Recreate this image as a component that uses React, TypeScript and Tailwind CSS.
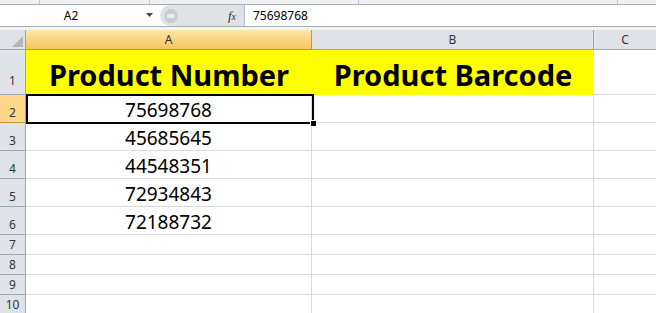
import React from 'react'

const font = "font-['Noto_Sans',sans-serif]"

const rows: { n: number; h: string; a?: string }[] = [
  { n: 2, h: 'h-[28px]', a: '75698768' },
  { n: 3, h: 'h-[28px]', a: '45685645' },
  { n: 4, h: 'h-[28px]', a: '44548351' },
  { n: 5, h: 'h-[28px]', a: '72934843' },
  { n: 6, h: 'h-[28px]', a: '72188732' },
  { n: 7, h: 'h-[20px]' },
  { n: 8, h: 'h-[20px]' },
  { n: 9, h: 'h-[20px]' },
  { n: 10, h: 'h-[20px]' },
]

export default function App() {
  return (
    <div className={`w-[656px] h-[313px] overflow-hidden bg-white ${font}`}>
      {/* ribbon remnant */}
      <div className="flex h-[5px] border-b border-[#a7acb3] bg-[#eef0f3]">
        <div className="w-[40px] border-r border-[#c3c7cd]" />
        <div className="w-[110px] border-r border-[#c3c7cd]" />
        <div className="w-[209px] border-r border-[#c3c7cd]" />
        <div className="w-[259px] border-r border-[#c3c7cd]" />
      </div>

      {/* formula bar */}
      <div className="flex h-[22px] border-b border-[#a7acb3] bg-white">
        <div className="relative flex w-[160px] items-center justify-center">
          <span className="pr-[18px] text-[12px] text-black">A2</span>
          <svg className="absolute left-[146px] top-[8px]" width="7" height="4" viewBox="0 0 7 4">
            <path d="M0 0h7L3.5 4z" fill="#444" />
          </svg>
        </div>
        <div className="relative flex w-[85px] items-center rounded-l-full border-r border-[#b6bcc4] bg-[#dfe3e8]">
          <div className="ml-[4px] h-[14px] w-[14px] rounded-full bg-[#c9cdd2]">
            <div className="mx-auto mt-[5px] h-[4px] w-[8px] rounded-full bg-[#e9ebee]" />
          </div>
          <span className="ml-auto mr-[8px] font-['Liberation_Serif',serif] text-[13px] italic leading-none text-[#333]">
            f<span className="text-[10px]">x</span>
          </span>
        </div>
        <div className="flex flex-1 items-center pl-[8px] text-[12px] text-black">75698768</div>
      </div>

      <div className="h-[3px] bg-[#f4f5f7]" />

      {/* sheet grid */}
      <div className="grid grid-cols-[26px_286px_282px_1fr] text-black">
        {/* column headers */}
        <div className="relative h-[20px] border-r border-b border-[#9ea6b1] bg-[#dfe3e8]">
          <svg className="absolute right-[2px] bottom-[2px]" width="11" height="11" viewBox="0 0 11 11">
            <path d="M11 0v11H0z" fill="#b4b9c0" />
          </svg>
        </div>
        <div className="flex h-[20px] items-center justify-center border-r border-b border-[#c5973f] bg-gradient-to-b from-[#fde6a4] to-[#f7c65d] text-[12px] text-[#333]">
          A
        </div>
        <div className="flex h-[20px] items-center justify-center border-r border-b border-[#9ea6b1] bg-[#dfe3e8] text-[12px] text-[#333]">
          B
        </div>
        <div className="flex h-[20px] items-center justify-center border-b border-[#9ea6b1] bg-[#dfe3e8] text-[12px] text-[#333]">
          C
        </div>

        {/* row 1 */}
        <div className="flex h-[45px] items-end justify-center border-r border-b border-[#9ea6b1] bg-[#dfe3e8] pb-[7px] text-[12px] leading-none text-[#333]">
          1
        </div>
        <div className="flex h-[45px] items-center justify-center border-b border-[#0000ff] bg-[#ffff00] pt-[4px] text-[29px] font-bold leading-none">
          Product Number
        </div>
        <div className="flex h-[45px] items-center justify-center border-b border-[#ffff00] bg-[#ffff00] pt-[4px] text-[29px] font-bold leading-none">
          Product Barcode
        </div>
        <div className="h-[45px] border-b border-[#d9d9d9]" />

        {rows.map(r => (
          <React.Fragment key={r.n}>
            <div
              className={`flex ${r.h} items-end justify-center border-r border-b pb-[3px] text-[12px] leading-none text-[#333] ${
                r.n === 2 ? 'border-[#c5973f] bg-[#fdd88a]' : 'border-[#9ea6b1] bg-[#dfe3e8]'
              }`}
            >
              {r.n}
            </div>
            <div className={`relative flex ${r.h} items-center justify-center border-r border-b border-[#d9d9d9] pt-[3px] text-[19px] leading-none ${r.n === 2 ? 'z-10' : ''}`}>
              {r.a}
              {r.n === 2 && (
                <div className="absolute -top-px left-0 h-[30px] w-[288px] border-2 border-black">
                  <div className="absolute -right-[5px] -bottom-[5px] h-[7px] w-[7px] border border-white bg-black" />
                </div>
              )}
            </div>
            <div className={`${r.h} border-r border-b border-[#d9d9d9]`} />
            <div className={`${r.h} border-b border-[#d9d9d9]`} />
          </React.Fragment>
        ))}
      </div>
    </div>
  )
}
